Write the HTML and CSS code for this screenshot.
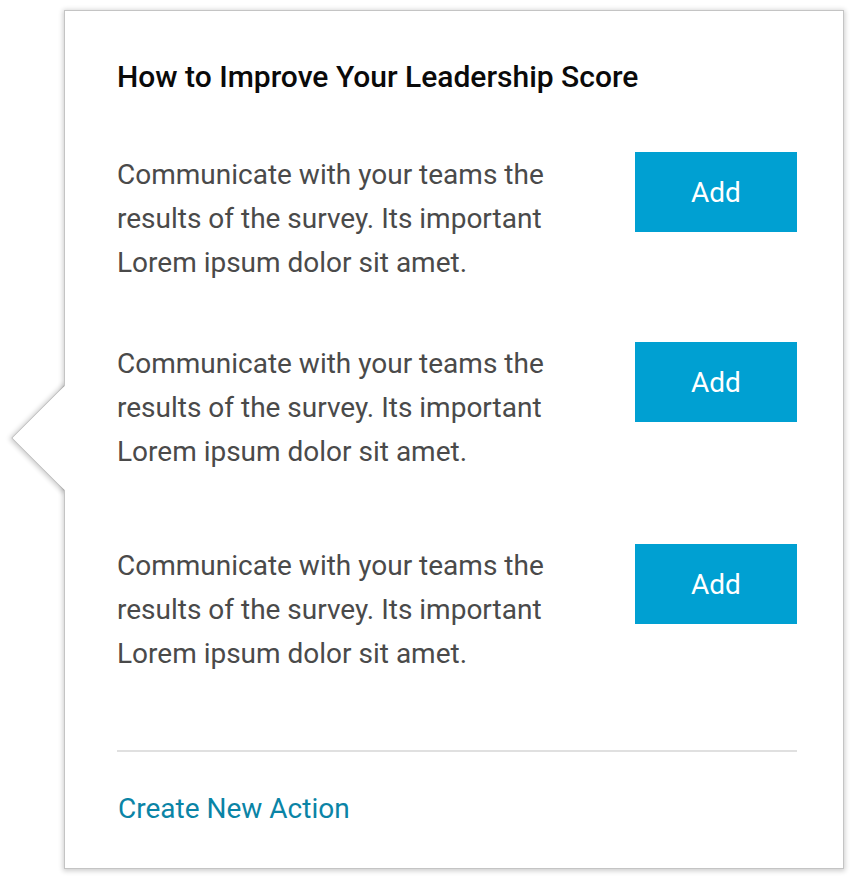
FILE: index.html
```html
<!DOCTYPE html>
<html>
<head>
<meta charset="utf-8">
<link rel="stylesheet" href="styles.css">
</head>
<body>
<div class="popover">
  <div class="card">
    <h2 class="title">How to Improve Your Leadership Score</h2>
    <div class="row row-1">
      <p class="text">Communicate with your teams the results of the survey. Its important Lorem ipsum dolor sit amet.</p>
      <button class="add">Add</button>
    </div>
    <div class="row row-2">
      <p class="text">Communicate with your teams the results of the survey. Its important Lorem ipsum dolor sit amet.</p>
      <button class="add">Add</button>
    </div>
    <div class="row row-3">
      <p class="text">Communicate with your teams the results of the survey. Its important Lorem ipsum dolor sit amet.</p>
      <button class="add">Add</button>
    </div>
    <hr class="divider">
    <a class="create" href="#">Create New Action</a>
  </div>
</div>
</body>
</html>
```
FILE: styles.css
```css
html, body {
  margin: 0;
  padding: 0;
  background: #fff;
}
body {
  font-family: Roboto, "Noto Sans", sans-serif;
  padding: 11px 0 12px 65px;
}
.popover {
  position: relative;
  z-index: 0;
  width: 778px;
}
.popover::before,
.popover::after {
  content: "";
  position: absolute;
  left: -37px;
  top: 390px;
  width: 74px;
  height: 74px;
  background: #fff;
  transform: rotate(45deg);
}
.popover::before {
  box-shadow: 0 0 0 1px #c4c4c4, 0 1px 5px 2px rgba(0,0,0,0.2);
}
.card {
  position: relative;
  box-sizing: border-box;
  width: 778px;
  height: 857px;
  background: #fff;
  padding: 48px 46px 0 52px;
  box-shadow: 0 0 0 1px #c4c4c4, 0 1px 5px 2px rgba(0,0,0,0.2);
}
.popover::after {
  z-index: 1;
}
.title {
  margin: 0;
  font-size: 30px;
  line-height: 36px;
  font-weight: 500;
  color: #0a0a0a;
}
.row {
  display: flex;
  justify-content: space-between;
  align-items: flex-start;
}
.row-1 { margin-top: 58px; }
.row-2 { margin-top: 57px; }
.row-3 { margin-top: 70px; }
.text {
  margin: 0;
  width: 440px;
  font-size: 28px;
  line-height: 44px;
  color: #4a4a4a;
}
.add {
  width: 162px;
  height: 80px;
  border: none;
  background: #00a0d2;
  color: #fff;
  font-family: Roboto, sans-serif;
  font-size: 28px;
  cursor: pointer;
  padding: 0;
}
.row-1 .add { margin-top: -1px; }
.divider {
  border: none;
  height: 2px;
  background: #e0e0e0;
  margin: 74px 0 0 0;
}
.create {
  display: inline-block;
  margin-top: 41px;
  margin-left: 1px;
  font-size: 28px;
  line-height: 32px;
  color: #0a84a6;
  text-decoration: none;
}
```
